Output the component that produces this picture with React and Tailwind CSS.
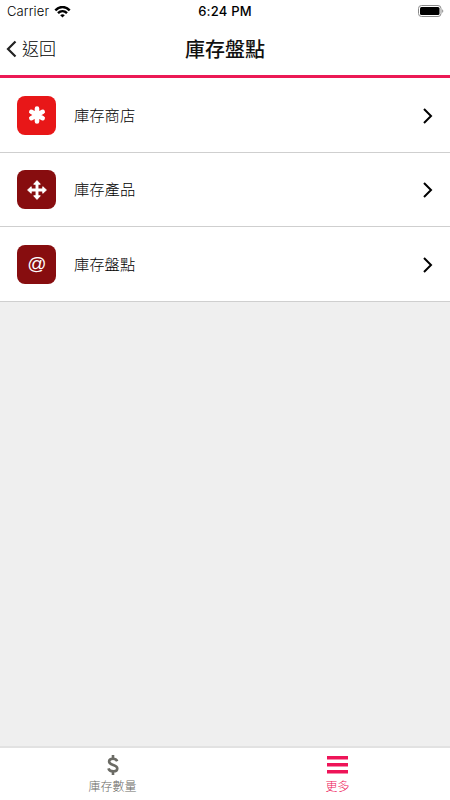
import React from 'react';

const items = [
  { id: 1, title: '庫存商店', icon: 'asterisk', color: 'bg-[#e81718]', height: 'h-[75px]' },
  { id: 2, title: '庫存產品', icon: 'arrows', color: 'bg-[#870d0f]', height: 'h-[74px]' },
  { id: 3, title: '庫存盤點', icon: 'at', color: 'bg-[#870d0f]', height: 'h-[75px]' },
];

function ItemIcon({ name }) {
  if (name === 'asterisk') {
    return (
      <svg width="20" height="20" viewBox="0 0 20 20" stroke="currentColor" strokeWidth="4.6" strokeLinecap="round">
        <path d="M10 3.6v12.8M4.300 6.800l11.400 6.400M4.300 13.200l11.400-6.400" />
      </svg>
    );
  }
  if (name === 'arrows') {
    return (
      <svg width="20" height="20" viewBox="0 0 20 20" fill="currentColor" stroke="currentColor" strokeLinejoin="round">
        <path d="M10 3v14M3 10h14" strokeWidth="2.9" />
        <path d="M10 .6l3.300 3.600H6.700zM10 19.400l3.300-3.600H6.700zM.6 10l3.600-3.300v6.600zM19.400 10l-3.600-3.300v6.600z" />
      </svg>
    );
  }
  return <span className="pb-px font-['Liberation_Sans',sans-serif] text-[19px] leading-none">@</span>;
}

function StatusBar() {
  return (
    <div className="relative flex h-[22px] items-center justify-between pl-[7px] pr-[6px] pt-px font-['Inter',sans-serif] text-[13px] text-black">
      <div className="flex items-center gap-[5px]">
        <span className="font-light tracking-[0.1px]">Carrier</span>
        <svg width="17" height="12" viewBox="0 0 16 12" fill="none" stroke="currentColor" strokeWidth="2.4">
          <path d="M.8 4.3C5-.1 11-.1 15.2 4.3" />
          <path d="M3.5 7.2c2.6-2.6 6.4-2.6 9 0" />
          <path d="M5.7 9.2C7 7.9 9 7.9 10.3 9.2L8 11.6z" fill="currentColor" stroke="none" />
        </svg>
      </div>
      <span className="absolute left-0 w-full text-center font-medium tracking-[0.2px]">6:24 PM</span>
      <svg width="26" height="12" viewBox="0 0 26 12" className="mb-[2px]">
        <rect x=".5" y=".5" width="22.5" height="11" rx="3" fill="none" stroke="#8a8a8a" />
        <rect x="2" y="2" width="19.5" height="8" rx="1.5" />
        <path d="M24.3 4.2c1.3.5 1.3 3.1 0 3.6z" fill="#777" />
      </svg>
    </div>
  );
}

function App() {
  return (
    <div className="flex h-screen flex-col bg-[#efefef] font-['Noto_Sans_CJK_TC',sans-serif] text-black">
      <header className="h-[78px] shrink-0 border-b-[3px] border-[#ec1955] bg-white">
        <StatusBar />
        <div className="grid h-[53px] grid-cols-3 items-center">
          <button className="flex items-center pl-[6px] text-[17px] font-light">
            <svg width="11" height="18" viewBox="0 0 11 18" fill="none" stroke="#222" strokeWidth="2.2" className="mr-[5px]">
              <path d="M9.5 1.5L2 9l7.5 7.5" />
            </svg>
            <span className="pb-[2px]">返回</span>
          </button>
          <h1 className="text-center text-[20px] font-medium text-[#111]">庫存盤點</h1>
        </div>
      </header>

      <main className="flex-1">
        {items.map((item) => (
          <div key={item.id} className={`flex items-center border-b border-[#cfcfcf] bg-white pl-[17.4px] pr-[17px] ${item.height}`}>
            <div className={`flex h-[39px] w-[39px] items-center justify-center rounded-[8px] text-white ${item.color}`}>
              <ItemIcon name={item.icon} />
            </div>
            <span className="ml-[17.6px] flex-1 pb-[2px] text-[15.3px] font-light">{item.title}</span>
            <svg width="11" height="16" viewBox="0 0 11 16" fill="none" stroke="#000" strokeWidth="2" className="mt-px">
              <path d="M2 1l7 7-7 7" />
            </svg>
          </div>
        ))}
      </main>

      <nav className="grid h-[54px] shrink-0 grid-cols-2 border-t-2 border-[#e2e2e2] bg-white text-[12px] leading-[16px]">
        <button className="flex flex-col items-center pt-[7px] font-light text-[#6b6b65]">
          <svg width="12" height="20" viewBox="0 0 12 20" fill="none" stroke="currentColor" strokeWidth="2.6">
            <path d="M6 0v3.5M6 16.5V20" />
            <path d="M10.2 6.2C9.4 4.3 8 3.7 6 3.7c-2.4 0-3.900 1.100-3.900 2.800C2.100 8.700 4 9.200 6 9.900c2.300.8 4.300 1.400 4.300 3.500 0 1.900-1.700 2.900-4.100 2.900-2.400 0-4.200-1-4.800-3" />
          </svg>
          <span className="mt-[3px]">庫存數量</span>
        </button>
        <button className="flex flex-col items-center pt-[7px] font-light text-[#ee1458]">
          <svg width="21" height="20" viewBox="0 0 21 20" fill="currentColor">
            <path d="M0 1h21v3.400H0zM0 8h21v3.400H0zM0 15h21v3.400H0z" />
          </svg>
          <span className="mt-[3px]">更多</span>
        </button>
      </nav>
    </div>
  );
}

export default App;
